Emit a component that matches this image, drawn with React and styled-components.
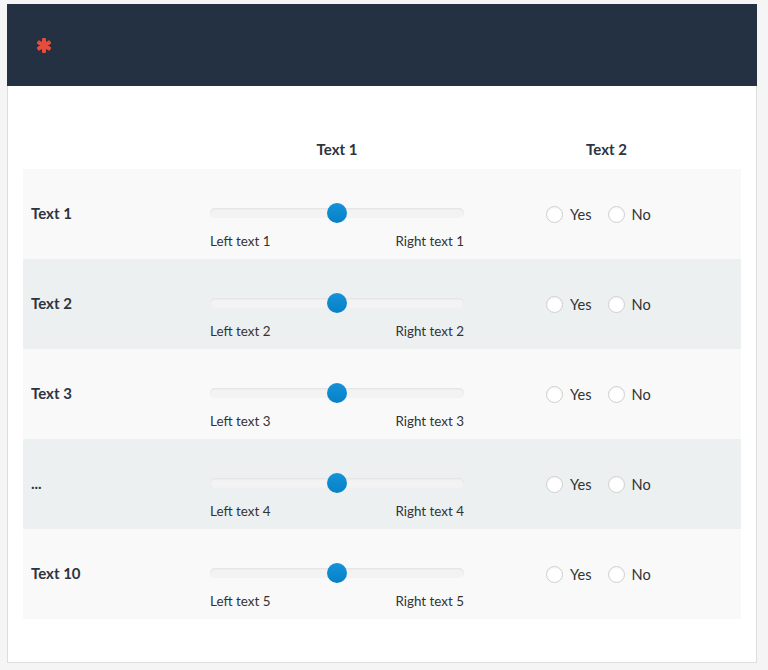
import React from 'react';
import styled, { createGlobalStyle } from 'styled-components';

const GlobalStyle = createGlobalStyle`
  body {
    margin: 0;
    background: #f5f5f5;
    font-family: Lato, 'Open Sans', sans-serif;
    color: #333;
  }
`;

const Page = styled.div`
  padding: 4px 11px 9px 7px;
`;

const Card = styled.div`
  background: #fff;
  border: 1px solid #ddd;
  border-top: none;
`;

const Header = styled.div`
  height: 82px;
  margin: 0 -1px;
  background: #243142;
  display: flex;
  align-items: center;
  padding-left: 30px;
`;

const Body = styled.div`
  padding: 44px 15px 43px 15px;
`;

const Grid = styled.div`
  display: grid;
  grid-template-columns: 179px 270px 269px;
`;

const HeadCell = styled.div`
  height: 39px;
  padding-bottom: 2px;
  box-sizing: border-box;
  display: flex;
  align-items: center;
  justify-content: center;
  font-weight: 700;
  font-size: 15px;
  color: #2c3440;
`;

const Row = styled.div`
  display: contents;
  > div {
    background: ${(p) => (p.$even ? '#ecf0f1' : '#f9f9f9')};
    height: 90px;
  }
`;

const LabelCell = styled.div`
  display: flex;
  align-items: center;
  padding: 0 0 2px 8px;
  box-sizing: border-box;
  font-weight: 700;
  font-size: 15px;
  color: #2c3440;
`;

const SliderCell = styled.div`
  display: flex;
  flex-direction: column;
  justify-content: center;
  padding: 26px 8px 0 8px;
  box-sizing: border-box;
`;

const SliderBox = styled.div`
  position: relative;
  height: 20px;
  display: flex;
  align-items: center;
`;

const Track = styled.div`
  width: 100%;
  height: 10px;
  border-radius: 6px;
  background: #f3f3f3;
  box-shadow: inset 0 1px 2px rgba(0, 0, 0, 0.08);
`;

const Handle = styled.div`
  position: absolute;
  top: 0;
  left: calc(50% - 10px);
  width: 20px;
  height: 20px;
  border-radius: 50%;
  background: linear-gradient(#1592d8, #0681c8);
`;

const Ends = styled.div`
  display: flex;
  justify-content: space-between;
  margin-top: 8px;
  font-size: 13.4px;
  line-height: 20px;
  color: #333;
`;

const RadioCell = styled.div`
  display: flex;
  align-items: center;
  padding-left: 74px;
  gap: 16px;
`;

const Option = styled.label`
  display: flex;
  align-items: center;
  gap: 7px;
  font-size: 14.6px;
  color: #333;
`;

const Circle = styled.span`
  width: 15px;
  height: 15px;
  border-radius: 50%;
  border: 1px solid #cfcfcf;
  background: #fff;
  box-shadow: inset 0 1px 2px rgba(0, 0, 0, 0.05);
`;

const Asterisk = () => (
  <svg width="14" height="15" viewBox="0 0 14 15">
    <g fill="#e74c3c" transform="translate(7 7.5)">
      <rect x="-2" y="-7.5" width="4" height="15" rx="1" />
      <rect x="-2" y="-7.5" width="4" height="15" rx="1" transform="rotate(60)" />
      <rect x="-2" y="-7.5" width="4" height="15" rx="1" transform="rotate(-60)" />
    </g>
  </svg>
);

const rows = [
  ['Text 1', 1],
  ['Text 2', 2],
  ['Text 3', 3],
  ['...', 4],
  ['Text 10', 5],
];

export default function App() {
  return (
    <>
      <GlobalStyle />
      <Page>
        <Card>
          <Header>
            <Asterisk />
          </Header>
          <Body>
            <Grid>
              <HeadCell />
              <HeadCell>Text 1</HeadCell>
              <HeadCell>Text 2</HeadCell>
              {rows.map(([label, n], i) => (
                <Row key={label} $even={i % 2 === 1}>
                  <LabelCell>{label}</LabelCell>
                  <SliderCell>
                    <SliderBox>
                      <Track />
                      <Handle />
                    </SliderBox>
                    <Ends>
                      <span>Left text {n}</span>
                      <span>Right text {n}</span>
                    </Ends>
                  </SliderCell>
                  <RadioCell>
                    <Option>
                      <Circle />
                      Yes
                    </Option>
                    <Option>
                      <Circle />
                      No
                    </Option>
                  </RadioCell>
                </Row>
              ))}
            </Grid>
          </Body>
        </Card>
      </Page>
    </>
  );
}
